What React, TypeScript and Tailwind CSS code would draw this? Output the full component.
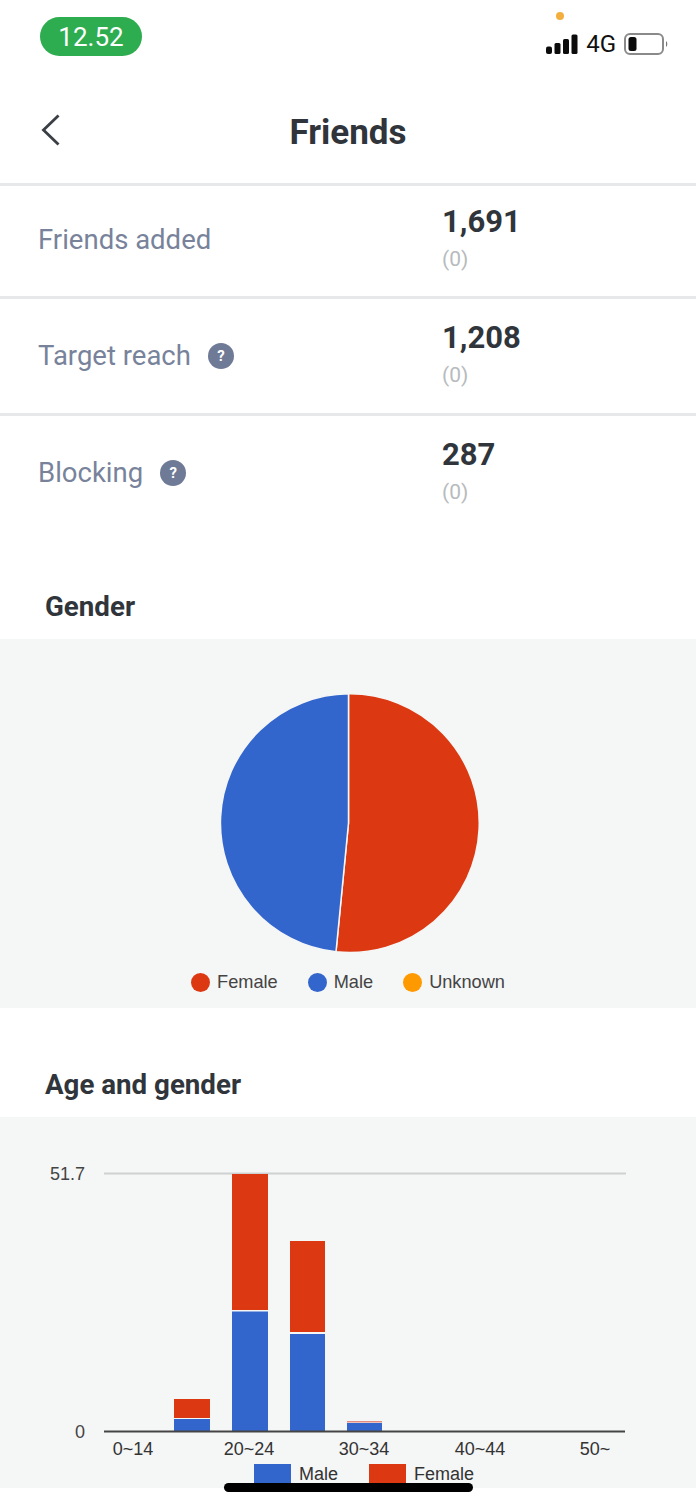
const roboto = "font-['Roboto',sans-serif]";

function Row({ label, value, help, className }: { label: string; value: string; help?: boolean; className: string }) {
  return (
    <div className={`flex items-center border-b-[3px] ${className}`}>
      <div className="flex w-[442px] items-center gap-[17px] pl-[38px] text-[27.5px] leading-none text-[#78839b]">
        <span>{label}</span>
        {help && (
          <span className="flex h-[26px] w-[26px] items-center justify-center rounded-full bg-[#6f7a96] text-[15px] font-bold text-white">?</span>
        )}
      </div>
      <div className="flex flex-col">
        <span className="text-[31px] font-bold leading-[36px] text-[#30353b]">{value}</span>
        <span className="mt-[2px] text-[21px] leading-[34px] text-[#b7bbbe]">(0)</span>
      </div>
    </div>
  );
}

function Dot({ color, label }: { color: string; label: string }) {
  return (
    <div className="flex items-center gap-[7px]">
      <span className="h-[19px] w-[19px] rounded-full" style={{ backgroundColor: color }} />
      <span>{label}</span>
    </div>
  );
}

const bars = [
  { x: 174, w: 36, parts: [{ y: 1399, h: 19, c: "#dc3912" }, { y: 1419, h: 12, c: "#3366cc" }] },
  { x: 232, w: 36, parts: [{ y: 1174, h: 136, c: "#dc3912" }, { y: 1311.5, h: 119.5, c: "#3366cc" }] },
  { x: 290, w: 35, parts: [{ y: 1241, h: 91, c: "#dc3912" }, { y: 1334, h: 97, c: "#3366cc" }] },
  { x: 347, w: 35, parts: [{ y: 1421, h: 1.5, c: "#e58b80" }, { y: 1423, h: 8, c: "#3366cc" }] },
];

const ticks = [
  { x: 133, t: "0~14" },
  { x: 249, t: "20~24" },
  { x: 364, t: "30~34" },
  { x: 480, t: "40~44" },
  { x: 595, t: "50~" },
];

export default function App() {
  return (
    <div className={`relative h-[1507px] w-[696px] overflow-hidden bg-white ${roboto}`}>
      {/* status bar */}
      <div className="relative flex h-[76px] items-start justify-between pl-10 pr-[28px]">
        <div className="mt-[17px] flex h-[39px] w-[102px] items-center justify-center rounded-full bg-[#2eac50] text-[26px] leading-none text-white">12.52</div>
        <div className="mt-[32px] flex items-center gap-2">
          <svg width="32" height="20" viewBox="0 0 32 20" fill="#0c0c0c">
            <rect x="0" y="12.5" width="6" height="7.5" rx="2" />
            <rect x="8.5" y="9" width="6" height="11" rx="1.5" />
            <rect x="17" y="5" width="6" height="15" rx="1.5" />
            <rect x="25.5" y="0.5" width="6" height="19.5" rx="1.5" />
          </svg>
          <span className="text-[24px] leading-none text-[#111]">4G</span>
          <svg width="44" height="22" viewBox="0 0 44 22">
            <rect x="1" y="1" width="38" height="20" rx="5" fill="none" stroke="#8a8a8a" strokeWidth="2" />
            <rect x="4.5" y="4" width="8" height="14" rx="2.5" fill="#0c0c0c" />
            <path d="M42 8 a4 4 0 0 1 0 6z" fill="#777" />
          </svg>
        </div>
        <span className="absolute left-[556px] top-3 h-2 w-2 rounded-full bg-[#f3ae3f]" />
      </div>

      {/* header */}
      <div className="grid h-[110px] grid-cols-[1fr_auto_1fr] items-center border-b-[3px] border-[#e6e8e9] pl-10">
        <svg width="22" height="32" viewBox="0 0 22 34" fill="none" stroke="#3b4046" strokeWidth="3">
          <path d="M19 1.5 3 17l16 15.5" />
        </svg>
        <span className="mr-10 mt-[5px] text-[35px] font-bold leading-none text-[#30353b]">Friends</span>
        <span />
      </div>

      {/* stats */}
      <div className="flex flex-col">
        <Row className="h-[113px] border-[#e6e8e9] pb-[3px]" label="Friends added" value="1,691" />
        <Row className="h-[117px] border-[#e6e8e9]" label="Target reach" value="1,208" help />
        <Row className="h-[117px] border-transparent" label="Blocking" value="287" help />
      </div>

      {/* gender */}
      <h2 className="mt-[56px] pl-[45px] text-[27.7px] font-bold leading-[36px] text-[#30353b]">Gender</h2>
      <div className="mt-[14px] flex h-[369px] flex-col items-center bg-[#f5f6f6] pt-[54px] font-['Liberation_Sans',sans-serif]">
        <svg width="260" height="260" viewBox="0 0 260 260" className="ml-[2px] shrink-0">
          <path d="M129.5 130 L129.5 .75 A129.4 129.4 0 1 1 117 258.8 Z" fill="#dc3912" stroke="#f5f6f6" strokeWidth="1.5" />
          <path d="M129.5 130 L117 258.8 A129.4 129.4 0 0 1 129.5 .75 Z" fill="#3366cc" stroke="#f5f6f6" strokeWidth="1.5" />
        </svg>
        <div className="mt-5 flex items-center gap-[30px] text-[18.2px] leading-none text-[#444]">
          <Dot color="#dc3912" label="Female" />
          <Dot color="#3366cc" label="Male" />
          <Dot color="#ff9900" label="Unknown" />
        </div>
      </div>

      {/* age & gender */}
      <h2 className="mt-[59px] pl-[45px] text-[27.7px] font-bold leading-[36px] text-[#30353b]">Age and gender</h2>
      <div className="mt-[14px] h-[371px] bg-[#f5f6f6]">
        <svg width="696" height="371" viewBox="0 1117 696 371" className="block font-['Liberation_Sans',sans-serif]">
          <rect x="104" y="1172.5" width="522" height="2" fill="#cfd2d2" />
          {bars.map((b) =>
            b.parts.map((p) => (
              <rect key={`${b.x}-${p.y}`} x={b.x} y={p.y} width={b.w} height={p.h} fill={p.c} />
            ))
          )}
          <rect x="104" y="1430.5" width="521" height="2" fill="#444" />
          <text x="85" y="1180" textAnchor="end" fontSize="18" fill="#444">51.7</text>
          <text x="85" y="1438" textAnchor="end" fontSize="18" fill="#444">0</text>
          {ticks.map((t) => (
            <text key={t.t} x={t.x} y="1455" textAnchor="middle" fontSize="18" fill="#333">{t.t}</text>
          ))}
          <rect x="254" y="1464" width="37" height="24" fill="#3366cc" />
          <text x="299" y="1480" fontSize="18" fill="#333">Male</text>
          <rect x="369" y="1464" width="37" height="24" fill="#dc3912" />
          <text x="414" y="1480" fontSize="18" fill="#333">Female</text>
        </svg>
      </div>

      {/* home indicator */}
      <div className="absolute left-[224px] top-[1483px] h-[9px] w-[249px] rounded-full bg-black" />
    </div>
  );
}
